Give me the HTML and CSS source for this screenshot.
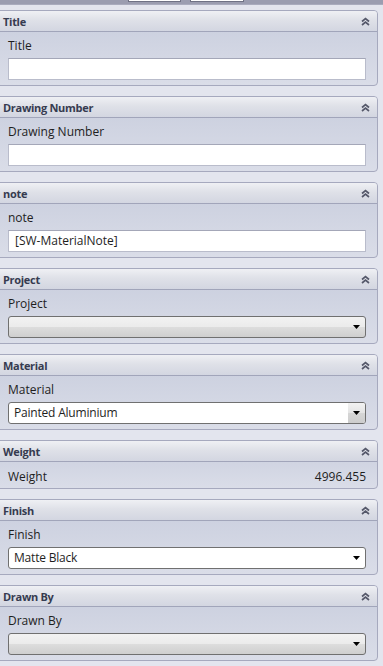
FILE: index.html
```html
<!DOCTYPE html>
<html lang="en">
<head>
    <meta charset="UTF-8">
    <meta name="viewport" content="width=device-width, initial-scale=1.0">
    <title>Properties</title>
    <link rel="stylesheet" href="styles.css">
</head>
<body>

<div class="top-strip">
    <span class="tab"></span>
    <span class="tab"></span>
</div>

<div class="panels">

    <div class="panel">
        <div class="panel-header">
            <span>Title</span>
            <svg class="chevron" viewBox="0 0 9 9"><path d="M1 4.5 L4.5 1.5 L8 4.5 M1 8 L4.5 5 L8 8"/></svg>
        </div>
        <div class="panel-body">
            <div class="field-label">Title</div>
            <div class="text-box"></div>
        </div>
    </div>

    <div class="panel">
        <div class="panel-header">
            <span>Drawing Number</span>
            <svg class="chevron" viewBox="0 0 9 9"><path d="M1 4.5 L4.5 1.5 L8 4.5 M1 8 L4.5 5 L8 8"/></svg>
        </div>
        <div class="panel-body">
            <div class="field-label">Drawing Number</div>
            <div class="text-box"></div>
        </div>
    </div>

    <div class="panel">
        <div class="panel-header">
            <span>note</span>
            <svg class="chevron" viewBox="0 0 9 9"><path d="M1 4.5 L4.5 1.5 L8 4.5 M1 8 L4.5 5 L8 8"/></svg>
        </div>
        <div class="panel-body">
            <div class="field-label">note</div>
            <div class="text-box">[SW-MaterialNote]</div>
        </div>
    </div>

    <div class="panel">
        <div class="panel-header">
            <span>Project</span>
            <svg class="chevron" viewBox="0 0 9 9"><path d="M1 4.5 L4.5 1.5 L8 4.5 M1 8 L4.5 5 L8 8"/></svg>
        </div>
        <div class="panel-body">
            <div class="field-label">Project</div>
            <div class="combo empty">
                <span class="combo-text"></span>
                <span class="combo-arrow"><svg viewBox="0 0 7 4"><path d="M0 0 H7 L3.5 4 Z"/></svg></span>
            </div>
        </div>
    </div>

    <div class="panel">
        <div class="panel-header">
            <span>Material</span>
            <svg class="chevron" viewBox="0 0 9 9"><path d="M1 4.5 L4.5 1.5 L8 4.5 M1 8 L4.5 5 L8 8"/></svg>
        </div>
        <div class="panel-body">
            <div class="field-label">Material</div>
            <div class="combo editable">
                <span class="combo-text">Painted Aluminium</span>
                <span class="combo-arrow"><svg viewBox="0 0 7 4"><path d="M0 0 H7 L3.5 4 Z"/></svg></span>
            </div>
        </div>
    </div>

    <div class="panel">
        <div class="panel-header">
            <span>Weight</span>
            <svg class="chevron" viewBox="0 0 9 9"><path d="M1 4.5 L4.5 1.5 L8 4.5 M1 8 L4.5 5 L8 8"/></svg>
        </div>
        <div class="panel-body row">
            <div class="field-label">Weight</div>
            <div class="field-value">4996.455</div>
        </div>
    </div>

    <div class="panel">
        <div class="panel-header">
            <span>Finish</span>
            <svg class="chevron" viewBox="0 0 9 9"><path d="M1 4.5 L4.5 1.5 L8 4.5 M1 8 L4.5 5 L8 8"/></svg>
        </div>
        <div class="panel-body">
            <div class="field-label">Finish</div>
            <div class="combo filled">
                <span class="combo-text">Matte Black</span>
                <span class="combo-arrow"><svg viewBox="0 0 7 4"><path d="M0 0 H7 L3.5 4 Z"/></svg></span>
            </div>
        </div>
    </div>

    <div class="panel">
        <div class="panel-header">
            <span>Drawn By</span>
            <svg class="chevron" viewBox="0 0 9 9"><path d="M1 4.5 L4.5 1.5 L8 4.5 M1 8 L4.5 5 L8 8"/></svg>
        </div>
        <div class="panel-body">
            <div class="field-label">Drawn By</div>
            <div class="combo empty">
                <span class="combo-text"></span>
                <span class="combo-arrow"><svg viewBox="0 0 7 4"><path d="M0 0 H7 L3.5 4 Z"/></svg></span>
            </div>
        </div>
    </div>

</div>

</body>
</html>
```

FILE: styles.css
```css
body {
    margin: 0;
    padding: 0;
    background-color: #e3e5ee; /* page background */
    font-family: 'Open Sans', 'Noto Sans', sans-serif;
    color: #1e1e1e;
    overflow: hidden;
}

/* grey strip at the very top with the bottom of two buttons */
.top-strip {
    height: 4px;
    background-color: #9b9db0;
    border-bottom: 1px solid #a9abbd;
    display: flex;
    padding-left: 128px;
    gap: 9px;
}

.tab {
    width: 51px;
    height: 1px;
    background-color: #ffffff;
    border: 1px solid #6f7184;
    border-top: none;
}

.tab + .tab {
    width: 52px;
}

.panels {
    display: flex;
    flex-direction: column;
    gap: 10px;
    padding-top: 5px;
}

.panel {
    margin-left: -3px; /* left edge is cut by the window */
    margin-right: 5px;
    border: 1px solid #a6a9be;
    border-radius: 0 4px 4px 0;
    background: linear-gradient(#c8cddd, #dadde8);
    overflow: hidden;
}

.panel-header {
    height: 20px;
    display: flex;
    align-items: center;
    justify-content: space-between;
    padding: 0 7px 0 5px;
    background: linear-gradient(#eff0f4, #dfe1e8 45%, #d3d6e1);
    border-bottom: 1px solid #a1a5ba;
    font-size: 11px;
    font-weight: bold;
    letter-spacing: -0.3px;
    color: #363b50;
}

.chevron {
    width: 9px;
    height: 9px;
    fill: none;
    stroke: #55586a;
    stroke-width: 1.7;
}

.panel-body {
    padding: 6px 11px 5px 10px;
}

.panel-body.row {
    display: flex;
    justify-content: space-between;
    padding: 7px 11px 3px 10px;
}

.field-label {
    font-size: 12px;
    line-height: 16px;
    margin-bottom: 4px;
}

.row .field-label,
.field-value {
    margin: 0;
    font-size: 12px;
    line-height: 16px;
}

.text-box {
    height: 20px;
    background-color: #ffffff;
    border: 1px solid #b9bccb;
    border-top-color: #a4a7b8;
    font-size: 12px;
    line-height: 20px;
    padding-left: 6px;
}

.combo {
    height: 20px;
    display: flex;
    border: 1px solid #707070;
    border-radius: 3px;
    font-size: 12px;
    line-height: 20px;
    overflow: hidden;
}

.combo.empty {
    background: linear-gradient(#f2f2f2, #ebebeb 50%, #dddddd 50%, #cfcfcf);
}

.combo.editable,
.combo.filled {
    background-color: #ffffff;
}

.combo-text {
    flex: 1;
    padding-left: 5px;
    letter-spacing: -0.2px;
}

.combo-arrow {
    width: 17px;
    display: flex;
    align-items: center;
    justify-content: center;
}

.combo.editable .combo-arrow {
    background: linear-gradient(#f2f2f2, #e4e4e4 50%, #d6d6d6 50%, #cdcdcd);
}

.combo-arrow svg {
    width: 7px;
    height: 4px;
    fill: #000000;
}
```
